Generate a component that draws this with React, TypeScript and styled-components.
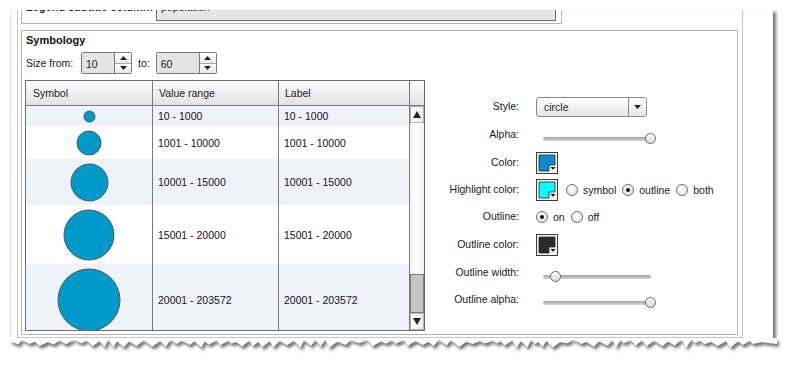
import React from "react";
import styled, { createGlobalStyle } from "styled-components";

const GlobalStyle = createGlobalStyle`
  html, body {
    margin: 0;
    padding: 0;
    background: #ffffff;
  }
  body {
    font-family: "Liberation Sans", Arial, sans-serif;
    font-size: 10.5px;
    color: #1c1c1c;
  }
`;

const Page = styled.div`
  position: relative;
  width: 785px;
  height: 365px;
  padding: 10px 0 0 10px;
  box-sizing: border-box;
  overflow: hidden;
`;

const Frame = styled.div`
  width: 763px;
  height: 340px;
  background: #ffffff;
  border-left: 1px solid #e4e4e4;
  box-sizing: border-box;
  box-shadow: 3px 2px 3px rgba(0, 0, 0, 0.55);
`;

const Clip = styled.div`
  height: 100%;
  overflow: hidden;
  padding-left: 6px;
`;

const Container = styled.div`
  width: 726px;
  height: 328px;
  box-sizing: border-box;
  border: 1px solid #c6c6c6;
  border-top: none;
  padding-left: 3px;
  display: flow-root;
`;

const TopBox = styled.div`
  display: flow-root;
  width: 541px;
  height: 14px;
  box-sizing: border-box;
  border: 1px solid #b4b4b4;
  border-top: none;
`;

const TopRow = styled.div`
  display: flex;
  height: 20px;
  margin-top: -9px;
`;

const TopLabel = styled.div`
  width: 134px;
  box-sizing: border-box;
  padding-left: 4px;
  font-size: 11px;
  font-weight: bold;
  line-height: 13px;
  white-space: nowrap;
  overflow: hidden;
`;

const TopInput = styled.div`
  width: 400px;
  height: 20px;
  box-sizing: border-box;
  border: 1px solid #6e6e6e;
  border-top: none;
  background: #e6e6e6;
  padding-left: 4px;
  line-height: 13px;
  font-size: 10.5px;
`;

const Fieldset = styled.div`
  margin-top: 6px;
  width: 717px;
  height: 305px;
  box-sizing: border-box;
  border: 1px solid #b4b4b4;
`;

const Legend = styled.div`
  padding: 2px 0 0 4px;
  font-size: 11px;
  font-weight: bold;
  line-height: 14px;
  color: #111;
`;

const SizeRow = styled.div`
  display: flex;
  align-items: center;
  height: 22px;
  margin-top: 5px;
  padding-left: 4px;
`;

const SizeLabel = styled.span<{ $w?: number; $ml?: number }>`
  width: ${(p) => (p.$w ? `${p.$w}px` : "auto")};
  margin-left: ${(p) => p.$ml ?? 0}px;
  margin-right: ${(p) => (p.$w ? 0 : 6)}px;
  white-space: nowrap;
`;

const Spinner = styled.div<{ $w: number }>`
  display: flex;
  width: ${(p) => p.$w}px;
  height: 22px;
  box-sizing: border-box;
  border: 1px solid #7a7a7a;
  border-radius: 2px;
  overflow: hidden;
`;

const SpinField = styled.div`
  flex: 1;
  background: #e4e4e4;
  padding: 5px 0 0 4px;
  font-size: 10.5px;
  line-height: 13px;
`;

const SpinButtons = styled.div`
  display: flex;
  flex-direction: column;
  width: 16px;
  border-left: 1px solid #7a7a7a;
`;

const SpinButton = styled.div<{ $bottom?: boolean }>`
  flex: 1;
  display: flex;
  align-items: center;
  justify-content: center;
  background: linear-gradient(#ffffff, #e9e9e9);
  border-top: ${(p) => (p.$bottom ? "1px solid #a8a8a8" : "none")};
`;

const Body = styled.div`
  display: flex;
  margin-top: 6px;
  padding-left: 3px;
`;

const Table = styled.div`
  display: flex;
  width: 400px;
  height: 251px;
  box-sizing: border-box;
  border: 1px solid #6a6a6a;
`;

const TableMain = styled.div`
  width: 384px;
`;

const HeaderRow = styled.div`
  display: flex;
  height: 25px;
  box-sizing: border-box;
  border-bottom: 1px solid #7a7a7a;
  background: linear-gradient(#fbfbfb, #e3e3e3);
`;

const HeaderCell = styled.div<{ $w: number; $pl?: number }>`
  width: ${(p) => p.$w}px;
  box-sizing: border-box;
  border-right: 1px solid #7a7a7a;
  padding-left: ${(p) => p.$pl ?? 6}px;
  line-height: 24px;
  color: #1a1a1a;
`;

const Rows = styled.div`
  height: 224px;
  overflow: hidden;
`;

const DataRow = styled.div<{ $h: number; $alt: boolean }>`
  display: flex;
  height: ${(p) => p.$h}px;
  background: ${(p) => (p.$alt ? "#eef3fa" : "#ffffff")};
`;

const Cell = styled.div<{ $w: number; $center?: boolean }>`
  width: ${(p) => p.$w}px;
  box-sizing: border-box;
  border-right: 1px solid #7a7a7a;
  display: flex;
  align-items: center;
  justify-content: ${(p) => (p.$center ? "center" : "flex-start")};
  padding-left: ${(p) => (p.$center ? 0 : 5)}px;
  color: #1a1020;
  white-space: nowrap;
`;

const ScrollColumn = styled.div`
  width: 14px;
  display: flex;
  flex-direction: column;
`;

const ScrollHeader = styled.div`
  height: 25px;
  box-sizing: border-box;
  border-bottom: 1px solid #7a7a7a;
  background: linear-gradient(#fbfbfb, #e3e3e3);
`;

const ScrollButton = styled.div`
  height: 17px;
  box-sizing: border-box;
  border: 1px solid #b4b4b4;
  background: linear-gradient(90deg, #ffffff, #ececec);
  display: flex;
  align-items: center;
  justify-content: center;
`;

const ScrollTrack = styled.div`
  height: 151px;
  background: linear-gradient(90deg, #f2f2f2, #ffffff 50%, #f0f0f0);
`;

const ScrollThumb = styled.div`
  height: 39px;
  box-sizing: border-box;
  border: 1px solid #7c7c7c;
  background: #c6c6c6;
`;

const Form = styled.div`
  margin: 14px 0 0 9px;
`;

const FormRow = styled.div<{ $h: number }>`
  display: grid;
  grid-template-columns: 85px auto;
  column-gap: 17px;
  align-items: center;
  height: ${(p) => p.$h}px;
`;

const FormLabel = styled.div`
  text-align: right;
  white-space: nowrap;
  color: #1a1a1a;
  margin-top: -2px;
`;

const Controls = styled.div`
  display: flex;
  align-items: center;
`;

const Select = styled.div`
  display: flex;
  width: 111px;
  height: 20px;
  box-sizing: border-box;
  border: 1px solid #8a8a8a;
  border-radius: 3px;
  background: linear-gradient(#ffffff, #e6e6e6);
`;

const SelectValue = styled.div`
  flex: 1;
  padding-left: 7px;
  line-height: 18px;
`;

const SelectButton = styled.div`
  width: 17px;
  border-left: 1px solid #8a8a8a;
  display: flex;
  align-items: center;
  justify-content: center;
`;

const Track = styled.div<{ $offset: number }>`
  position: relative;
  width: 108px;
  height: 4px;
  margin: ${(p) => p.$offset}px 0 0 7px;
  border-radius: 2px;
  background: linear-gradient(#a2a2a2, #d6d6d6);
`;

const Thumb = styled.div`
  position: absolute;
  top: -4px;
  width: 11px;
  height: 11px;
  box-sizing: border-box;
  border-radius: 50%;
  border: 1px solid #6a6a6a;
  background: linear-gradient(#ffffff, #d8d8d8);
`;

const RadioOption = styled.label<{ $first?: boolean }>`
  display: flex;
  align-items: center;
  margin-left: ${(p) => (p.$first ? 0 : 6)}px;
  white-space: nowrap;
  color: #1a1a1a;
`;

const RadioCircle = styled.span<{ $checked: boolean }>`
  position: relative;
  width: 12px;
  height: 12px;
  box-sizing: border-box;
  border-radius: 50%;
  border: 1px solid #6e6e6e;
  background: radial-gradient(circle at 40% 35%, #ffffff, #dedede);
  margin-right: 5px;

  &::after {
    content: "";
    display: ${(p) => (p.$checked ? "block" : "none")};
    position: absolute;
    left: 3px;
    top: 3px;
    width: 4px;
    height: 4px;
    border-radius: 50%;
    background: #111;
  }
`;

const SwatchWrap = styled.div<{ $mr?: number }>`
  width: 22px;
  height: 22px;
  margin-right: ${(p) => p.$mr ?? 0}px;
`;

const TornEdge = styled.svg`
  position: absolute;
  left: 0;
  top: 338px;
`;

const Arrow = ({ up, w = 7, h = 4 }: { up?: boolean; w?: number; h?: number }) => (
  <svg width={w} height={h} viewBox={`0 0 ${w} ${h}`}>
    <polygon
      points={up ? `0,${h} ${w},${h} ${w / 2},0` : `0,0 ${w},0 ${w / 2},${h}`}
      fill="#222"
    />
  </svg>
);

const Swatch = ({ color, mr }: { color: string; mr?: number }) => (
  <SwatchWrap $mr={mr}>
    <svg width="22" height="22" viewBox="0 0 22 22">
      <rect x="0.5" y="0.5" width="21" height="21" fill="#f2f2f2" stroke="#3c3c3c" />
      <polygon
        points="3,3 19,3 19,13 13,13 13,19 3,19"
        fill={color}
        stroke="#2c2c2c"
        strokeWidth="0.8"
      />
      <polygon points="14.5,15 19.5,15 17,17.8" fill="#111" />
    </svg>
  </SwatchWrap>
);

const Spin = ({ value, w }: { value: string; w: number }) => (
  <Spinner $w={w}>
    <SpinField>{value}</SpinField>
    <SpinButtons>
      <SpinButton>
        <Arrow up />
      </SpinButton>
      <SpinButton $bottom>
        <Arrow />
      </SpinButton>
    </SpinButtons>
  </Spinner>
);

const Slider = ({ center, offset }: { center: number; offset: number }) => (
  <Track $offset={offset}>
    <Thumb style={{ left: center - 543 - 5.5 }} />
  </Track>
);

const Radio = ({ label, checked, first }: { label: string; checked?: boolean; first?: boolean }) => (
  <RadioOption $first={first}>
    <RadioCircle $checked={!!checked} />
    {label}
  </RadioOption>
);

const classes = [
  { range: "10 - 1000", d: 11, h: 20 },
  { range: "1001 - 10000", d: 24, h: 33 },
  { range: "10001 - 15000", d: 37, h: 46 },
  { range: "15001 - 20000", d: 50, h: 59 },
  { range: "20001 - 203572", d: 62, h: 72 },
];

// jagged bottom edge of the screenshot clipping
const tornPoints = (() => {
  let seed = 11;
  const rnd = () => {
    seed = (seed * 9301 + 49297) % 233280;
    return seed / 233280;
  };
  const pts: string[] = ["10,0"];
  let x = 10;
  let i = 0;
  while (x < 777) {
    const y = i % 2 === 0 ? 1 + rnd() * 3 : 5 + rnd() * 5;
    pts.push(`${x.toFixed(1)},${y.toFixed(1)}`);
    x += 3 + rnd() * 6;
    i++;
  }
  pts.push("777,6", "777,0");
  return pts.join(" ");
})();

export default function App() {
  return (
    <>
      <GlobalStyle />
      <Page>
        <Frame>
          <Clip>
            <Container>
              <TopBox>
                <TopRow>
                  <TopLabel>Legend subtitle column:</TopLabel>
                  <TopInput>population</TopInput>
                </TopRow>
              </TopBox>

              <Fieldset>
                <Legend>Symbology</Legend>
                <SizeRow>
                  <SizeLabel $w={55}>Size from:</SizeLabel>
                  <Spin value="10" w={51} />
                  <SizeLabel $ml={6}>to:</SizeLabel>
                  <Spin value="60" w={61} />
                </SizeRow>

                <Body>
                  <Table>
                    <TableMain>
                      <HeaderRow>
                        <HeaderCell $w={127} $pl={7}>Symbol</HeaderCell>
                        <HeaderCell $w={126}>Value range</HeaderCell>
                        <HeaderCell $w={131}>Label</HeaderCell>
                      </HeaderRow>
                      <Rows>
                        {classes.map((c, i) => (
                          <DataRow key={c.range} $h={c.h} $alt={i % 2 === 0}>
                            <Cell $w={127} $center>
                              <svg width={c.d + 2} height={c.d + 2}>
                                <circle
                                  cx={(c.d + 2) / 2}
                                  cy={(c.d + 2) / 2}
                                  r={c.d / 2}
                                  fill="#0099cc"
                                  stroke="#555"
                                  strokeWidth="1"
                                />
                              </svg>
                            </Cell>
                            <Cell $w={126}>{c.range}</Cell>
                            <Cell $w={131}>{c.range}</Cell>
                          </DataRow>
                        ))}
                      </Rows>
                    </TableMain>
                    <ScrollColumn>
                      <ScrollHeader />
                      <ScrollButton>
                        <Arrow up w={8} h={7} />
                      </ScrollButton>
                      <ScrollTrack />
                      <ScrollThumb />
                      <ScrollButton>
                        <Arrow w={8} h={7} />
                      </ScrollButton>
                    </ScrollColumn>
                  </Table>

                  <Form>
                    <FormRow $h={26}>
                      <FormLabel>Style:</FormLabel>
                      <Controls>
                        <Select>
                          <SelectValue>circle</SelectValue>
                          <SelectButton>
                            <Arrow />
                          </SelectButton>
                        </Select>
                      </Controls>
                    </FormRow>
                    <FormRow $h={30}>
                      <FormLabel>Alpha:</FormLabel>
                      <Slider center={650} offset={8} />
                    </FormRow>
                    <FormRow $h={25}>
                      <FormLabel>Color:</FormLabel>
                      <Controls>
                        <Swatch color="#0a8ccc" />
                      </Controls>
                    </FormRow>
                    <FormRow $h={29}>
                      <FormLabel>Highlight color:</FormLabel>
                      <Controls>
                        <Swatch color="#00ffff" mr={8} />
                        <Radio label="symbol" first />
                        <Radio label="outline" checked />
                        <Radio label="both" />
                      </Controls>
                    </FormRow>
                    <FormRow $h={25}>
                      <FormLabel>Outline:</FormLabel>
                      <Controls>
                        <Radio label="on" checked first />
                        <Radio label="off" />
                      </Controls>
                    </FormRow>
                    <FormRow $h={31}>
                      <FormLabel>Outline color:</FormLabel>
                      <Controls>
                        <Swatch color="#2a2a2a" />
                      </Controls>
                    </FormRow>
                    <FormRow $h={26}>
                      <FormLabel>Outline width:</FormLabel>
                      <Slider center={555} offset={8} />
                    </FormRow>
                    <FormRow $h={28}>
                      <FormLabel>Outline alpha:</FormLabel>
                      <Slider center={650} offset={6} />
                    </FormRow>
                  </Form>
                </Body>
              </Fieldset>
            </Container>
          </Clip>
        </Frame>

        <TornEdge width="785" height="27" viewBox="0 0 785 27">
          <defs>
            <filter id="tornBlur" x="-5%" y="-50%" width="110%" height="200%">
              <feGaussianBlur stdDeviation="1.4" />
            </filter>
          </defs>
          <rect x="0" y="0" width="785" height="27" fill="#ffffff" />
          <polygon
            points={tornPoints}
            fill="rgba(0,0,0,0.55)"
            transform="translate(2,3)"
            filter="url(#tornBlur)"
          />
          <polygon points={tornPoints} fill="#ffffff" />
        </TornEdge>
      </Page>
    </>
  );
}
